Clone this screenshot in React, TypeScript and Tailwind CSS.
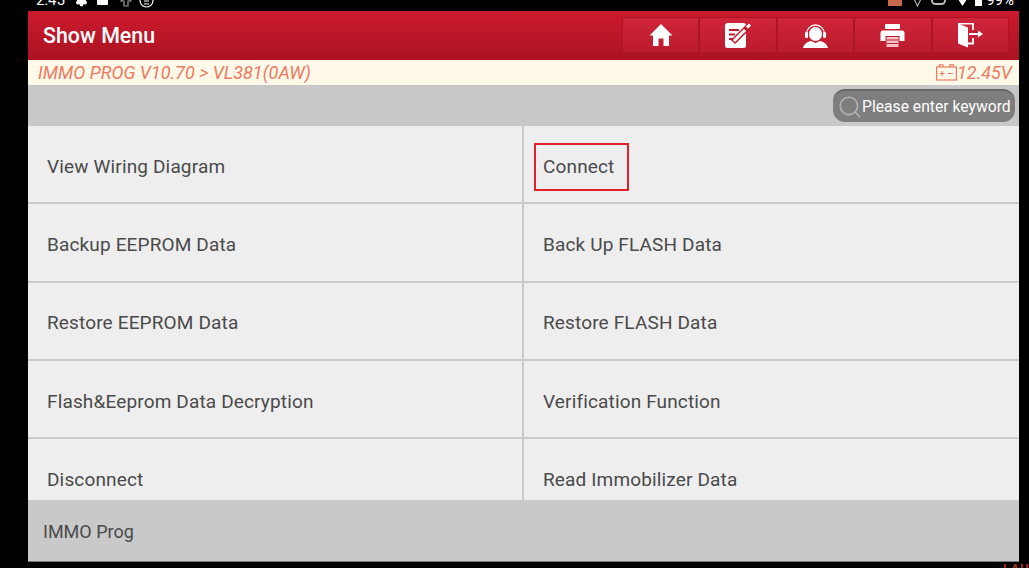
import type { ReactNode } from "react";
import { Search, Settings } from "lucide-react";

const rows = [
  ["View Wiring Diagram", "Connect"],
  ["Backup EEPROM Data", "Back Up FLASH Data"],
  ["Restore EEPROM Data", "Restore FLASH Data"],
  ["Flash&Eeprom Data Decryption", "Verification Function"],
  ["Disconnect", "Read Immobilizer Data"],
];

function HomeIcon() {
  return (
    <svg width="24" height="24" viewBox="0 0 24 24" fill="white">
      <path d="M12 1 L23.5 12.5 H20 V23 H14.5 V15.5 H9.5 V23 H4 V12.5 H0.5 Z" />
    </svg>
  );
}

function NoteIcon() {
  return (
    <svg width="28" height="28" viewBox="0 0 28 28" fill="none">
      <rect x="1" y="2" width="21" height="25" rx="2.5" fill="white" />
      <path d="M5 9 H15 M5 13.5 H11 M5 18 H9" stroke="#c11c2e" strokeWidth="1.8" />
      <path d="M9 21 L24 6" stroke="#c11c2e" strokeWidth="6" />
      <path d="M10 20 L21 9" stroke="white" strokeWidth="3" />
      <path d="M23 6.5 L26 3.5" stroke="white" strokeWidth="3" />
    </svg>
  );
}

function AgentIcon() {
  return (
    <svg width="27" height="27" viewBox="0 0 27 27" fill="none">
      <path d="M4.5 12 A9 9 0 0 1 22.5 12" stroke="white" strokeWidth="1.3" />
      <rect x="3" y="10" width="3" height="6" rx="1.2" fill="white" />
      <rect x="21" y="10" width="3" height="6" rx="1.2" fill="white" />
      <ellipse cx="13.5" cy="12" rx="6.5" ry="7" fill="white" />
      <path d="M1 26 C2 21.5 6 19.5 9 19 L13.5 21 L18 19 C21 19.5 25 21.5 26 26 Z" fill="white" />
    </svg>
  );
}

function PrinterIcon() {
  return (
    <svg width="25" height="25" viewBox="0 0 25 25" fill="none">
      <rect x="5" y="1" width="15" height="5" rx="1" fill="white" />
      <path d="M3 7.5 H22 A2.5 2.5 0 0 1 24.5 10 V18 H0.5 V10 A2.5 2.5 0 0 1 3 7.5 Z" fill="white" />
      <rect x="5.5" y="13" width="14" height="11" fill="#c11c2e" />
      <path d="M6.5 14 H18.5 V24 H6.5 Z" fill="#f3c3c8" />
      <path d="M6.5 17 H18.5 M6.5 20.5 H18.5" stroke="#c11c2e" strokeWidth="1.2" />
    </svg>
  );
}

function ExitIcon() {
  return (
    <svg width="27" height="25" viewBox="0 0 27 25" fill="none">
      <path d="M1 0.5 L11 4.5 V24.5 L1 20.5 Z" fill="white" />
      <path d="M1 0.5 H16 V7 M16 15 V20.5 H11" stroke="white" strokeWidth="1.8" />
      <path d="M12 11 H22" stroke="white" strokeWidth="2" />
      <path d="M21 7.5 L26 11 L21 14.5 Z" fill="white" />
    </svg>
  );
}

function BatteryIcon() {
  return (
    <svg width="21" height="17" viewBox="0 0 21 17" fill="none" stroke="#ee7a62" strokeWidth="1.2">
      <rect x="0.6" y="3" width="19.8" height="13" />
      <path d="M3.5 3 V0.8 H7 V3 M14 3 V0.8 H17.5 V3 M3.5 9.5 H8.5 M6 7 V12 M12 9.5 H17" />
    </svg>
  );
}

function StatusBar() {
  return (
    <div className="flex h-[11px] items-end justify-between overflow-hidden pr-[15px] pl-[36px] text-[15px] leading-none text-white">
      <div className="mb-[3px] flex items-center">
        <span className="w-[39px]">2:45</span>
        <Settings size={13} fill="white" color="white" />
        <div className="ml-[9px] h-[8px] w-[11px] rounded-[1px] bg-white" />
        <svg width="12" height="14" viewBox="0 0 12 14" fill="none" stroke="#999" strokeWidth="1.2" className="ml-[12px]">
          <path d="M1 7 L6 2 L11 7 H8 V12 H4 V7 Z" />
        </svg>
        <svg width="15" height="15" viewBox="0 0 15 15" fill="none" stroke="white" strokeWidth="1.2" className="ml-[7px]">
          <circle cx="7.5" cy="7.5" r="6.5" />
          <path d="M5 5 H10 M5 8 H10 M5 11 H10" />
        </svg>
      </div>
      <div className="mb-[3px] flex items-center">
        <div className="mr-[10px] h-[10px] w-[14px] bg-[#c9674a]" />
        <svg width="11" height="12" viewBox="0 0 11 12" fill="none" stroke="#bbb" strokeWidth="1.1" className="mr-[8px]">
          <path d="M1 2 H10 L5.5 11 Z" />
        </svg>
        <div className="mr-[10px] h-[9px] w-[15px] rounded-full border-2 border-[#bbb]" />
        <svg width="13" height="10" viewBox="0 0 13 10" fill="white" className="mr-[6px]">
          <path d="M0 0 H13 L6.5 10 Z" />
        </svg>
        <div className="mr-[4px] h-[10px] w-[7px] bg-white" />
        <span>99%</span>
      </div>
    </div>
  );
}

function ToolButton({ children }: { children: ReactNode }) {
  return (
    <div className="flex h-[36px] w-[77.4px] items-center justify-center border border-[#a81627] bg-gradient-to-b from-[#d0243a] to-[#bb1b2d]">
      {children}
    </div>
  );
}

function Cell({ label, boxed, left }: { label: string; boxed?: boolean; left?: boolean }) {
  return (
    <div
      className={
        left
          ? "relative flex h-[78.3px] w-[496px] items-center border-r-2 border-b-2 border-[#c9cbc9] bg-[#eeeeee] pt-[5.6px] pl-[19px] text-[19px] tracking-[0.15px] text-[#4a4a4a]"
          : "relative flex h-[78.3px] flex-1 items-center border-b-2 border-[#c9cbc9] bg-[#eeeeee] pt-[5.6px] pl-[19px] text-[19px] tracking-[0.15px] text-[#4a4a4a]"
      }
    >
      {label}
      {boxed && <div className="absolute top-[17px] left-[10px] h-[48px] w-[95px] border-2 border-[#e0202c]" />}
    </div>
  );
}

export default function App() {
  return (
    <div className="relative h-[568px] w-[1029px] overflow-hidden bg-black font-['Roboto',sans-serif]">
      <StatusBar />
      <div className="mx-[28px] flex h-[551px] w-[991px] flex-col border-b border-[#777]">
        <div className="flex h-[49px] items-center justify-between bg-gradient-to-b from-[#cc1a2d] to-[#ab1322] pr-[10px] pl-[15px]">
          <span className="pt-[2px] text-[21.4px] font-medium text-white">Show Menu</span>
          <div className="-mt-[1px] flex">
            <ToolButton><HomeIcon /></ToolButton>
            <ToolButton><NoteIcon /></ToolButton>
            <ToolButton><AgentIcon /></ToolButton>
            <ToolButton><PrinterIcon /></ToolButton>
            <ToolButton><ExitIcon /></ToolButton>
          </div>
        </div>
        <div className="flex h-[25px] items-center justify-between bg-[#fef9e8] pr-[7px] pl-[10px] text-[18px] text-[#ee7a62] italic">
          <span>IMMO PROG V10.70 &gt; VL381(0AW)</span>
          <span className="flex items-center">
            <BatteryIcon />
            12.45V
          </span>
        </div>
        <div className="flex h-[41px] items-center justify-end bg-[#c8c8c8] pr-[4px]">
          <div className="flex h-[33px] w-[182px] items-center rounded-[12px] border-t-2 border-[#666] bg-[#7d7e7d] pl-[4px] text-[15.7px] text-white">
            <Search size={26} color="#b5b5b5" strokeWidth={1.5} className="-mr-[1px]" />
            Please enter keyword
          </div>
        </div>
        <div className="flex-1 overflow-hidden bg-[#eeeeee]">
          {rows.map((row) => (
            <div key={row[0]} className="flex">
              <Cell label={row[0]} left />
              <Cell label={row[1]} boxed={row[1] === "Connect"} />
            </div>
          ))}
        </div>
        <div className="flex h-[61px] items-center bg-[#c8c9c8] pt-[2px] pl-[15px] text-[18px] text-[#4a4a4a]">
          IMMO Prog
        </div>
      </div>
      <span className="absolute top-[559px] left-[1003px] text-[13px] font-bold tracking-wider text-[#a33020]">
        LAUNCH
      </span>
    </div>
  );
}
